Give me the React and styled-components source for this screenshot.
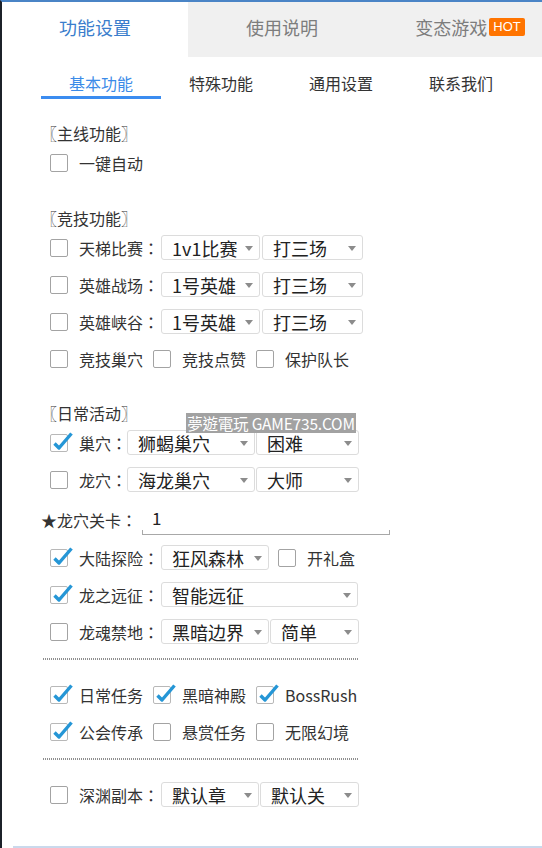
import React from 'react';
import styled, { createGlobalStyle } from 'styled-components';

const GlobalStyle = createGlobalStyle`
	html, body {
		margin: 0;
		padding: 0;
		background: #fff;
	}
	body {
		font-family: "Noto Sans CJK SC", "Noto Sans", sans-serif;
	}
`;

const Page = styled.div`
	position: relative;
	height: 848px;
	box-sizing: border-box;
	border-left: 2px solid #1c2129;
	border-top: 2px solid #4a84c6;
	display: flex;
	flex-direction: column;
	overflow: hidden;
`;

const TabBar = styled.div`
	display: flex;
	height: 55px;
	flex-shrink: 0;
	overflow: hidden;
`;

const Tab = styled.div`
	flex: 0 0 ${(p) => p.$w}px;
	display: flex;
	align-items: center;
	justify-content: center;
	padding-bottom: 5px;
	font-size: 18px;
	color: ${(p) => (p.$active ? '#3a7dcc' : '#7d7d7d')};
	background: ${(p) => (p.$active ? '#fff' : '#f0f0f0')};
`;

const Hot = styled.span`
	margin-left: 2px;
	background: #ff7400;
	color: #fff;
	font-family: "Liberation Sans", sans-serif;
	font-size: 13px;
	line-height: 18px;
	padding: 0 4px;
	border-radius: 2px;
`;

const SubBar = styled.div`
	display: flex;
	padding-left: 39px;
	flex-shrink: 0;
`;

const SubTab = styled.div`
	width: 120px;
	text-align: center;
	padding-top: 15px;
	padding-bottom: 2px;
	line-height: 22px;
	font-size: 16px;
	color: ${(p) => (p.$active ? '#3b8be8' : '#333')};
	border-bottom: 3px solid ${(p) => (p.$active ? '#3b8cf0' : 'transparent')};
`;

const Content = styled.div`
	padding-left: 39px;
	padding-top: 23px;
	display: flex;
	flex-direction: column;
`;

const Header = styled.div`
	height: 22px;
	line-height: 22px;
	font-size: 16px;
	color: #333;
	margin-top: ${(p) => p.$mt || 0}px;
`;

const Row = styled.div`
	height: ${(p) => p.$h || 37}px;
	display: flex;
	align-items: center;
	padding-left: ${(p) => (p.$flush ? 0 : 9)}px;
	margin-top: ${(p) => p.$mt || 0}px;
`;

const Item = styled.div`
	display: flex;
	align-items: center;
	width: ${(p) => (p.$w ? `${p.$w}px` : 'auto')};
	margin-left: ${(p) => p.$ml || 0}px;
`;

const Box = styled.span`
	position: relative;
	width: 18px;
	height: 18px;
	box-sizing: border-box;
	border: 1px solid ${(p) => (p.$on ? '#b8b8b8' : '#a3a3a3')};
	border-radius: 2px;
	background: #fff;
	flex-shrink: 0;
`;

const Tick = styled.svg`
	position: absolute;
	left: -1px;
	top: -6px;
`;

const Label = styled.span`
	margin-left: 11px;
	font-size: 16px;
	color: #333;
	white-space: nowrap;
`;

const Colon = styled.span`
	font-family: "Noto Sans CJK JP", "Noto Sans CJK SC", sans-serif;
`;

const Select = styled.div`
	position: relative;
	width: ${(p) => p.$w}px;
	height: 25px;
	box-sizing: border-box;
	margin-left: ${(p) => p.$ml || 0}px;
	border: 1px solid #dcdcdc;
	border-radius: 3px;
	background: #fff;
	display: flex;
	align-items: center;
	padding-left: 10px;
	font-size: 18px;
	color: #222;
	white-space: nowrap;
	flex-shrink: 0;

	&::after {
		content: '';
		position: absolute;
		right: 6px;
		top: 50%;
		margin-top: -2px;
		border-left: 4px solid transparent;
		border-right: 4px solid transparent;
		border-top: 5px solid #8c8c8c;
	}
`;

const StarLabel = styled.span`
	font-size: 16px;
	color: #333;
	white-space: nowrap;
`;

const LineInput = styled.div`
	position: relative;
	width: 248px;
	height: 30px;
	margin-left: 5px;
	padding-left: 10px;
	box-sizing: border-box;
	font-size: 17px;
	color: #222;
	line-height: 26px;
	border-bottom: 1px solid #a8a8a8;

	&::before,
	&::after {
		content: '';
		position: absolute;
		bottom: 0;
		width: 1px;
		height: 4px;
		background: #a8a8a8;
	}
	&::before {
		left: 0;
	}
	&::after {
		right: 0;
	}
`;

const Dots = styled.div`
	width: 316px;
	height: 2px;
	margin: ${(p) => p.$m};
	background-image: repeating-linear-gradient(90deg, #8f8f8f 0 1px, transparent 1px 2px);
`;

const Footer = styled.div`
	margin-top: auto;
	margin-left: 11px;
	height: 2px;
	background: #cad9ec;
`;

const Watermark = styled.div`
	position: absolute;
	left: 184px;
	top: 411px;
	width: 170px;
	height: 20px;
	background: #a2a2a2;
	color: #fff;
	font-family: "Noto Sans CJK TC", "Noto Sans", sans-serif;
	font-size: 15.5px;
	line-height: 20px;
	text-align: center;
	white-space: nowrap;
	letter-spacing: -0.2px;
`;

function Check({ on, text, w, ml }) {
	const colon = text && text.endsWith('：');
	return (
		<Item $w={w} $ml={ml}>
			<Box $on={on}>
				{on && (
					<Tick width="24" height="24" viewBox="0 0 24 24">
						<path
							d="M4.5 14.5 L9 19 L21.5 4.5"
							fill="none"
							stroke="#2596d6"
							strokeWidth="3.4"
							strokeLinejoin="round"
						/>
					</Tick>
				)}
			</Box>
			{text && (
				<Label>
					{colon ? text.slice(0, -1) : text}
					{colon && <Colon>：</Colon>}
				</Label>
			)}
		</Item>
	);
}

export default function App() {
	return (
		<>
			<GlobalStyle />
			<Page>
				<TabBar>
					<Tab $w={186} $active>
						功能设置
					</Tab>
					<Tab $w={188}>使用说明</Tab>
					<Tab $w={188}>
						变态游戏<Hot>HOT</Hot>
					</Tab>
				</TabBar>

				<SubBar>
					<SubTab $active>基本功能</SubTab>
					<SubTab>特殊功能</SubTab>
					<SubTab>通用设置</SubTab>
					<SubTab>联系我们</SubTab>
				</SubBar>

				<Content>
					<Header>〖主线功能〗</Header>
					<Row>
						<Check text="一键自动" />
					</Row>

					<Header $mt={26}>〖竞技功能〗</Header>
					<Row>
						<Check text="天梯比赛：" />
						<Select $w={99} $ml={2}>1v1比赛</Select>
						<Select $w={101} $ml={2}>打三场</Select>
					</Row>
					<Row>
						<Check text="英雄战场：" />
						<Select $w={99} $ml={2}>1号英雄</Select>
						<Select $w={101} $ml={2}>打三场</Select>
					</Row>
					<Row>
						<Check text="英雄峡谷：" />
						<Select $w={99} $ml={2}>1号英雄</Select>
						<Select $w={101} $ml={2}>打三场</Select>
					</Row>
					<Row>
						<Check text="竞技巢穴" w={103} />
						<Check text="竞技点赞" w={103} />
						<Check text="保护队长" />
					</Row>

					<Header $mt={25}>〖日常活动〗</Header>
					<Row>
						<Check on text="巢穴：" />
						<Select $w={128} $ml={0}>狮蝎巢穴</Select>
						<Select $w={103} $ml={1}>困难</Select>
					</Row>
					<Row>
						<Check text="龙穴：" />
						<Select $w={128} $ml={0}>海龙巢穴</Select>
						<Select $w={103} $ml={1}>大师</Select>
					</Row>
					<Row $h={38} $mt={3} $flush>
						<StarLabel>
							★龙穴关卡<Colon>：</Colon>
						</StarLabel>
						<LineInput>1</LineInput>
					</Row>
					<Row>
						<Check on text="大陆探险：" />
						<Select $w={108} $ml={2}>狂风森林</Select>
						<Check text="开礼盒" ml={9} />
					</Row>
					<Row>
						<Check on text="龙之远征：" />
						<Select $w={197} $ml={2}>智能远征</Select>
					</Row>
					<Row>
						<Check text="龙魂禁地：" />
						<Select $w={108} $ml={2}>黑暗边界</Select>
						<Select $w={89} $ml={1}>简单</Select>
					</Row>

					<Dots $m="8px 0 16px 2px" />

					<Row>
						<Check on text="日常任务" w={103} />
						<Check on text="黑暗神殿" w={103} />
						<Check on text="BossRush" />
					</Row>
					<Row $h={38}>
						<Check on text="公会传承" w={103} />
						<Check text="悬赏任务" w={103} />
						<Check text="无限幻境" />
					</Row>

					<Dots $m="7px 0 16px 2px" />

					<Row>
						<Check text="深渊副本：" />
						<Select $w={98} $ml={2}>默认章</Select>
						<Select $w={99} $ml={1}>默认关</Select>
					</Row>
				</Content>

				<Footer />
				<Watermark>夢遊電玩 GAME735.COM</Watermark>
			</Page>
		</>
	);
}
